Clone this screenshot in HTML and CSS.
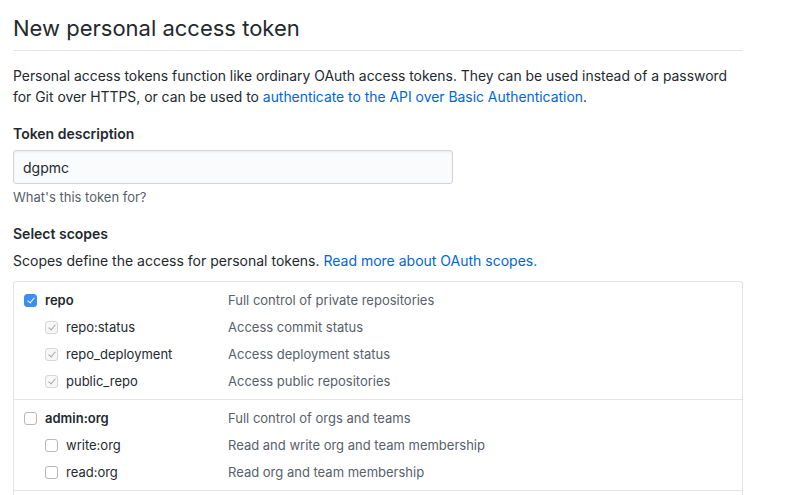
FILE: index.html
```html
<!DOCTYPE html>
<html lang="en">
<head>
<meta charset="utf-8">
<title>New personal access token</title>
<link rel="stylesheet" href="styles.css">
</head>
<body>
<div class="page">
  <h1 class="title">New personal access token</h1>
  <p class="intro">Personal access tokens function like ordinary OAuth access tokens. They can be used instead of a password for Git over HTTPS, or can be used to <a href="#" class="link">authenticate to the API over Basic Authentication</a>.</p>

  <div class="field">
    <label class="field-label" for="desc">Token description</label>
    <input id="desc" class="input" type="text" value="dgpmc">
    <p class="note">What's this token for?</p>
  </div>

  <div class="field field-scopes">
    <h3 class="field-label">Select scopes</h3>
    <p class="scopes-intro">Scopes define the access for personal tokens. <a href="#" class="link">Read more about OAuth scopes.</a></p>
  </div>

  <div class="scopes">
    <div class="group">
      <div class="row">
        <div class="name"><span class="cb cb-checked"></span><span class="label-strong">repo</span></div>
        <div class="desc">Full control of private repositories</div>
      </div>
      <div class="row">
        <div class="name sub"><span class="cb cb-disabled"></span><span class="label">repo:status</span></div>
        <div class="desc">Access commit status</div>
      </div>
      <div class="row">
        <div class="name sub"><span class="cb cb-disabled"></span><span class="label">repo_deployment</span></div>
        <div class="desc">Access deployment status</div>
      </div>
      <div class="row">
        <div class="name sub"><span class="cb cb-disabled"></span><span class="label">public_repo</span></div>
        <div class="desc">Access public repositories</div>
      </div>
    </div>
    <div class="group">
      <div class="row">
        <div class="name"><span class="cb"></span><span class="label-strong">admin:org</span></div>
        <div class="desc">Full control of orgs and teams</div>
      </div>
      <div class="row">
        <div class="name sub"><span class="cb"></span><span class="label">write:org</span></div>
        <div class="desc">Read and write org and team membership</div>
      </div>
      <div class="row">
        <div class="name sub"><span class="cb"></span><span class="label">read:org</span></div>
        <div class="desc">Read org and team membership</div>
      </div>
    </div>
    <div class="group"></div>
  </div>
</div>
</body>
</html>
```

FILE: styles.css
```css
* { box-sizing: border-box; }
html, body { margin: 0; padding: 0; background: #fff; }
body {
  font-family: Inter, "Liberation Sans", Arial, sans-serif;
  font-size: 14px;
  line-height: 21px;
  color: #24292e;
}
.page {
  width: 730px;
  margin-left: 13px;
  padding-top: 13px;
}
.title {
  margin: 0;
  font-size: 22px;
  font-weight: 400;
  line-height: 30px;
  padding-bottom: 7px;
  border-bottom: 1px solid #e1e4e8;
}
.intro {
  margin: 15px 0 15px;
  font-size: 13.9px;
}
.link { color: #0366d6; text-decoration: none; }
.field { margin-bottom: 15px; }
.field-scopes { margin-bottom: 10px; }
.field-label {
  display: block;
  margin: 0 0 6px;
  font-size: 14px;
  font-weight: 600;
  line-height: 21px;
}
.input {
  display: block;
  width: 440px;
  height: 34px;
  padding: 6px 9px;
  font: inherit;
  font-size: 14px;
  color: #24292e;
  background: #fafbfc;
  border: 1px solid #d1d5da;
  border-radius: 3px;
  box-shadow: inset 0 1px 2px rgba(27,31,35,0.075);
  outline: none;
}
.note {
  margin: 3px 0 0;
  font-size: 13px;
  line-height: 21px;
  color: #586069;
}
.scopes-intro { margin: 0; }
.scopes {
  border: 1px solid #e1e4e8;
  border-bottom: 0;
  border-radius: 3px 3px 0 0;
}
.group {
  padding: 5px 10px 4px;
  border-bottom: 1px solid #e1e4e8;
}
.row {
  display: grid;
  grid-template-columns: 204px 1fr;
  height: 27px;
  align-items: center;
  font-size: 13px;
}
.name { display: flex; align-items: center; gap: 8px; }
.name.sub { padding-left: 21px; }
.label-strong { font-weight: 600; }
.label { color: #24292e; }
.desc { color: #586069; }
.cb {
  width: 13px;
  height: 13px;
  flex: none;
  border: 1px solid #b8b8b8;
  border-radius: 3px;
  background: #fff;
  position: relative;
}
.cb-checked {
  background: #3b8ef5;
  border-color: #3b8ef5;
}
.cb-disabled {
  background: #f7f7f7;
  border-color: #d6d6d6;
}
.cb-checked::after, .cb-disabled::after {
  content: "";
  position: absolute;
  left: 3.5px;
  top: 1px;
  width: 3px;
  height: 6px;
  border: solid #fff;
  border-width: 0 1.6px 1.6px 0;
  transform: rotate(40deg);
}
.cb-disabled::after { border-color: #a8a8a8; border-width: 0 1.2px 1.2px 0; }
```
